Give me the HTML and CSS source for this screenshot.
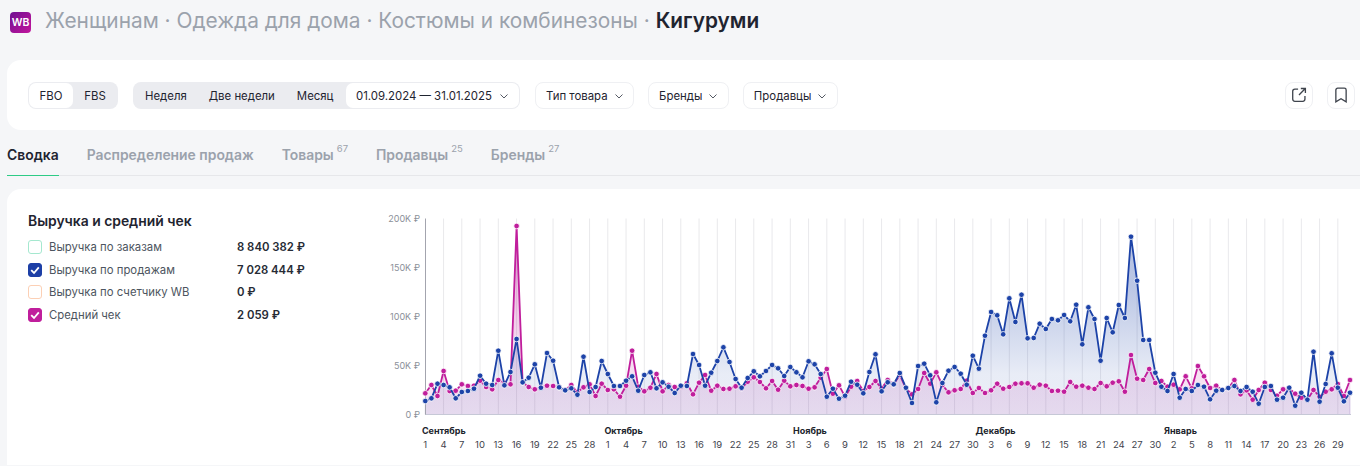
FILE: index.html
```html
<!DOCTYPE html>
<html lang="ru">
<head>
<meta charset="utf-8">
<title>Кигуруми</title>
<link rel="stylesheet" href="styles.css">
</head>
<body>
<div class="page">
  <header class="crumbs">
    <span class="logo">WB</span>
    <h1 class="crumb-text">Женщинам · Одежда для дома · Костюмы и комбинезоны · <b>Кигуруми</b></h1>
  </header>

  <section class="filters">
    <div class="seg seg-type">
      <span class="seg-item is-active">FBO</span>
      <span class="seg-item">FBS</span>
    </div>
    <div class="seg seg-period">
      <span class="seg-item">Неделя</span>
      <span class="seg-item">Две недели</span>
      <span class="seg-item">Месяц</span>
      <span class="seg-date"><span>01.09.2024 — 31.01.2025</span><svg class="chev" viewBox="0 0 10 10"><path d="M1.5 3.5 5 7l3.5-3.5"/></svg></span>
    </div>
    <button class="drop">Тип товара <svg class="chev" viewBox="0 0 10 10"><path d="M1.5 3.5 5 7l3.5-3.5"/></svg></button>
    <button class="drop">Бренды <svg class="chev" viewBox="0 0 10 10"><path d="M1.5 3.5 5 7l3.5-3.5"/></svg></button>
    <button class="drop">Продавцы <svg class="chev" viewBox="0 0 10 10"><path d="M1.5 3.5 5 7l3.5-3.5"/></svg></button>
    <div class="icon-btns">
      <button class="icon-btn"><svg viewBox="0 0 14 14"><path d="M6.2 1.8H3.4A1.9 1.9 0 0 0 1.5 3.7v6.9a1.9 1.9 0 0 0 1.9 1.9h6.9a1.9 1.9 0 0 0 1.9-1.9V7.8"/><path d="M7 7l5.3-5.4M8.6 1.3h4v4"/></svg></button>
      <button class="icon-btn"><svg viewBox="0 0 14 14"><path d="M2.5 2.6A1.6 1.6 0 0 1 4.1 1h5.8a1.6 1.6 0 0 1 1.6 1.6V13L7 10.2 2.5 13z"/></svg></button>
    </div>
  </section>

  <nav class="tabs">
    <a class="tab is-active">Сводка</a>
    <a class="tab">Распределение продаж</a>
    <a class="tab">Товары<sup>67</sup></a>
    <a class="tab">Продавцы<sup>25</sup></a>
    <a class="tab">Бренды<sup>27</sup></a>
  </nav>

  <section class="panel">
    <div class="legend">
      <h2 class="legend-title">Выручка и средний чек</h2>
      <div class="legend-row">
        <span class="box box-teal"></span><span class="legend-name">Выручка по заказам</span><span class="legend-val">8 840 382 ₽</span>
      </div>
      <div class="legend-row">
        <span class="box box-blue"><svg viewBox="0 0 14 14"><path d="M3.2 7.2 6 10l4.8-5.6"/></svg></span><span class="legend-name">Выручка по продажам</span><span class="legend-val">7 028 444 ₽</span>
      </div>
      <div class="legend-row">
        <span class="box box-orange"></span><span class="legend-name">Выручка по счетчику WB</span><span class="legend-val">0 ₽</span>
      </div>
      <div class="legend-row">
        <span class="box box-pink"><svg viewBox="0 0 14 14"><path d="M3.2 7.2 6 10l4.8-5.6"/></svg></span><span class="legend-name">Средний чек</span><span class="legend-val">2 059 ₽</span>
      </div>
    </div>
    <svg id="chart" class="chart" viewBox="380 210 980 256"></svg>
  </section>
</div>
<script src="script.js"></script>
</body>
</html>
```
FILE: styles.css
```css
* { box-sizing: border-box; }
html, body { margin: 0; height: 100%; overflow: hidden; }
body {
  background: #f5f6f8;
  font-family: Inter, "Noto Sans", sans-serif;
  color: #1f2430;
}
.page { padding-left: 7px; width: 1360px; }

.crumbs {
  display: flex;
  align-items: center;
  gap: 14px;
  height: 60px;
  padding: 0 0 19px 3px;
}
.logo {
  width: 21px;
  height: 21px;
  margin-top: 4px;
  border-radius: 4px;
  background: linear-gradient(135deg, #6f0f91, #c3169d);
  color: #fff;
  font-size: 10.5px;
  font-weight: 600;
  display: flex;
  align-items: center;
  justify-content: center;
}
.crumb-text {
  margin: 0;
  font-size: 20.85px;
  font-weight: 400;
  color: #9ba2ac;
  white-space: nowrap;
}
.crumb-text b { font-weight: 600; color: #1f2430; }

.filters {
  display: flex;
  align-items: center;
  height: 70px;
  padding-left: 21px;
  background: #fff;
  border-radius: 14px 0 0 14px;
  font-size: 11.4px;
}
.seg {
  display: flex;
  align-items: center;
  height: 27px;
  background: #ebecf0;
  border-radius: 8px;
  padding: 1px;
}
.seg-type { width: 90px; margin-right: 15px; }
.seg-period { width: 387px; margin-right: 15px; }
.seg-item { height: 25px; line-height: 27px; white-space: nowrap; }
.seg-type .seg-item { width: 44px; text-align: center; }
.seg-period .seg-item { padding: 0 11px; }
.is-active.seg-item { background: #fff; border-radius: 7px; }
.seg-date {
  margin-left: auto;
  width: 173px;
  height: 25px;
  background: #fff;
  border-radius: 7px;
  display: flex;
  align-items: center;
  padding: 2px 0 0 10px;
  gap: 7px;
  white-space: nowrap;
}
.chev { width: 10px; height: 10px; fill: none; stroke: #555a64; stroke-width: 1; flex: none; }
.drop {
  display: flex;
  align-items: center;
  gap: 6px;
  height: 27px;
  padding: 2px 9.5px 0 10px;
  margin-right: 14px;
  background: #fff;
  border: 1px solid #eff0f3;
  border-radius: 8px;
  font: inherit;
  color: inherit;
}
.icon-btns { display: flex; gap: 14px; margin-left: auto; margin-right: 5px; }
.icon-btn {
  width: 28px;
  height: 27px;
  padding: 0;
  background: #fff;
  border: 1px solid #eff0f3;
  border-radius: 8px;
  display: flex;
  align-items: center;
  justify-content: center;
}
.icon-btn svg { width: 16px; height: 16px; fill: none; stroke: #3f444d; stroke-width: 1.15; }

.tabs {
  display: flex;
  gap: 28px;
  height: 46px;
  border-bottom: 1px solid #e6e7ea;
  align-items: stretch;
}
.tab {
  font-size: 13.9px;
  font-weight: 600;
  color: #9ba2ac;
  padding-top: 17px;
  height: 46px;
  white-space: nowrap;
}
.tab.is-active { color: #1f2430; border-bottom: 1px solid #2ecb86; }
.tab sup {
  font-size: 9.5px;
  font-weight: 400;
  margin-left: 3px;
  vertical-align: 8px;
  line-height: 0;
}

.panel {
  display: flex;
  margin-top: 13px;
  height: 276px;
  background: #fff;
  border-radius: 14px 0 0 0;
  padding: 20px 0 0 21px;
}
.legend { width: 352px; flex: none; font-size: 11.35px; padding-top: 1px; }
.legend-title {
  margin: 0 0 4px;
  font-size: 13.9px;
  line-height: 22px;
  font-weight: 600;
}
.legend-row { display: flex; align-items: center; height: 22.5px; }
.box {
  width: 14px;
  height: 14px;
  border-radius: 3px;
  margin-right: 7px;
  border: 1px solid;
  flex: none;
}
.box svg { display: block; width: 14px; height: 14px; margin: -1px; fill: none; stroke: #fff; stroke-width: 1.8; }
.box-teal { border-color: #a5e8cf; }
.box-orange { border-color: #fcd0b5; }
.box-blue { background: #1d3fa6; border-color: #1d3fa6; }
.box-pink { background: #c01e9c; border-color: #c01e9c; }
.legend-name { width: 188px; color: #4d5560; }
.legend-val { font-weight: 600; color: #262b35; }

.chart { width: 980px; height: 256px; flex: none; display: block; }
.grid { stroke: #e9e9ec; stroke-width: 1; }
.axis-y { stroke: #a3a4ae; stroke-width: 1; }
.axis-x { stroke: #c6c8d6; stroke-width: 1; }
.y-label { font-size: 9px; fill: #8b9099; text-anchor: end; }
.m-label { font-size: 9px; font-weight: 700; fill: #20242c; }
.d-label { font-size: 9.5px; fill: #3f444d; text-anchor: middle; }
.line { fill: none; stroke-width: 1.8; stroke-linejoin: round; }
.line-blue { stroke: #1d43a8; }
.line-pink { stroke: #c01e9c; }
.area-blue { fill: url(#gBlue); stroke: rgba(29,67,168,.22); stroke-width: .5; stroke-miterlimit: 30; }
.area-pink { fill: url(#gPink); stroke: rgba(192,30,156,.2); stroke-width: .5; }
.dot { stroke: #fff; stroke-width: .8; }
.dot-blue { fill: #1d43a8; }
.dot-pink { fill: #c01e9c; }
```
FILE: script.js
```js
// Points are given as pixel heights measured from the plot, one per day from 1 Sep 2024.
var blueRaw = [198,190,146,150,157,190,171,168,161,122,146,150,47,151,111,12,142,128,88,158,54,77,157,166,160,179,65,171,156,78,117,153,153,137,124,167,120,112,160,142,155,174,152,153,57,90,152,113,78,37,81,132,158,129,109,124,108,90,100,123,96,112,127,79,88,117,185,161,191,182,140,149,175,111,58,169,142,148,114,158,204,93,86,121,202,144,107,96,116,149,62,101,2,-69,-59,-2,-110,-39,-121,10,9,-34,-18,-48,-44,-60,-41,-91,28,-83,-48,77,-51,-8,-90,-51,-295,-163,15,15,113,155,168,117,188,162,168,150,155,193,167,165,159,153,168,156,170,206,156,153,194,188,158,212,173,194,50,200,147,55,158,199,173];
var pinkRaw = [175,150,183,108,168,167,148,153,152,137,156,163,135,145,148,-327,142,156,163,157,152,153,157,165,150,172,157,148,183,146,165,163,185,152,47,155,169,158,117,169,150,156,155,145,178,143,120,167,152,162,161,154,160,140,127,141,160,138,164,137,154,150,153,161,157,128,102,176,151,185,155,138,168,156,138,160,135,148,120,160,178,162,114,146,112,150,172,166,162,137,174,159,174,166,146,161,156,146,145,145,158,149,152,168,167,170,141,155,152,158,162,144,154,143,139,170,60,131,135,102,144,138,155,149,163,124,160,93,124,159,152,165,160,135,178,166,194,165,143,165,182,163,160,176,188,194,165,185,170,163,147,183,135];
var monthNames = [["Сентябрь",0],["Октябрь",30],["Ноябрь",61],["Декабрь",91],["Январь",122]];
var x0 = 425.3, step = 924.7 / 152, base = 415.5;
var NS = "http://www.w3.org/2000/svg";
var svg = document.getElementById("chart");

function el(name, attrs, text) {
  var n = document.createElementNS(NS, name);
  for (var k in attrs) n.setAttribute(k, attrs[k]);
  if (text !== undefined) n.textContent = text;
  svg.appendChild(n);
  return n;
}
function px(i) { return x0 + i * step; }
function py(v) { return 336 + v / 3; }
function dayOf(i) {
  if (i < 30) return i + 1;
  if (i < 61) return i - 29;
  if (i < 91) return i - 60;
  if (i < 122) return i - 90;
  return i - 121;
}
function linePath(d) {
  return d.map(function (v, i) { return (i ? "L" : "M") + px(i).toFixed(1) + " " + py(v).toFixed(1); }).join("");
}
function gradient(id, color, stops) {
  var defs = svg.querySelector("defs") || el("defs", {});
  var g = document.createElementNS(NS, "linearGradient");
  g.setAttribute("id", id);
  g.setAttribute("gradientUnits", "userSpaceOnUse");
  g.setAttribute("x1", 0); g.setAttribute("x2", 0);
  g.setAttribute("y1", 219); g.setAttribute("y2", 415);
  stops.forEach(function (s) {
    var st = document.createElementNS(NS, "stop");
    st.setAttribute("offset", s[0]);
    st.setAttribute("stop-color", color);
    st.setAttribute("stop-opacity", s[1]);
    g.appendChild(st);
  });
  defs.appendChild(g);
}
gradient("gBlue", "#1d43a8", [[0, .34], [.36, .3], [.8, .1], [1, .09]]);
gradient("gPink", "#c01e9c", [[0, .45], [.66, .16], [1, .1]]);

["200K ₽", "150K ₽", "100K ₽", "50K ₽", "0 ₽"].forEach(function (t, i) {
  el("text", { "class": "y-label", x: 420, y: 223 + i * 49 }, t);
});
for (var i = 0; i <= 150; i += 3) {
  if (i) el("line", { "class": "grid", x1: px(i), x2: px(i), y1: 219.5, y2: 415 });
  el("text", { "class": "d-label", x: px(i), y: 448.5 }, dayOf(i));
}
monthNames.forEach(function (m) {
  el("text", { "class": "m-label", x: px(m[1]) - 3.4, y: 435 }, m[0]);
});

function series(d, name) {
  el("path", { "class": "area-" + name, d: linePath(d) + "L" + px(152) + " " + base + "L" + x0 + " " + base + "Z" });
}
function stroke(d, name) {
  el("path", { "class": "line line-" + name, d: linePath(d) });
  d.forEach(function (v, i) {
    el("circle", { "class": "dot dot-" + name, cx: px(i).toFixed(1), cy: py(v).toFixed(1), r: 2.8 });
  });
}
series(pinkRaw, "pink");
series(blueRaw, "blue");
el("line", { "class": "axis-x", x1: 425, x2: 1351, y1: base, y2: base });
el("line", { "class": "axis-y", x1: 425.5, x2: 425.5, y1: 219.5, y2: 415.5 });
stroke(pinkRaw, "pink");
stroke(blueRaw, "blue");
```
